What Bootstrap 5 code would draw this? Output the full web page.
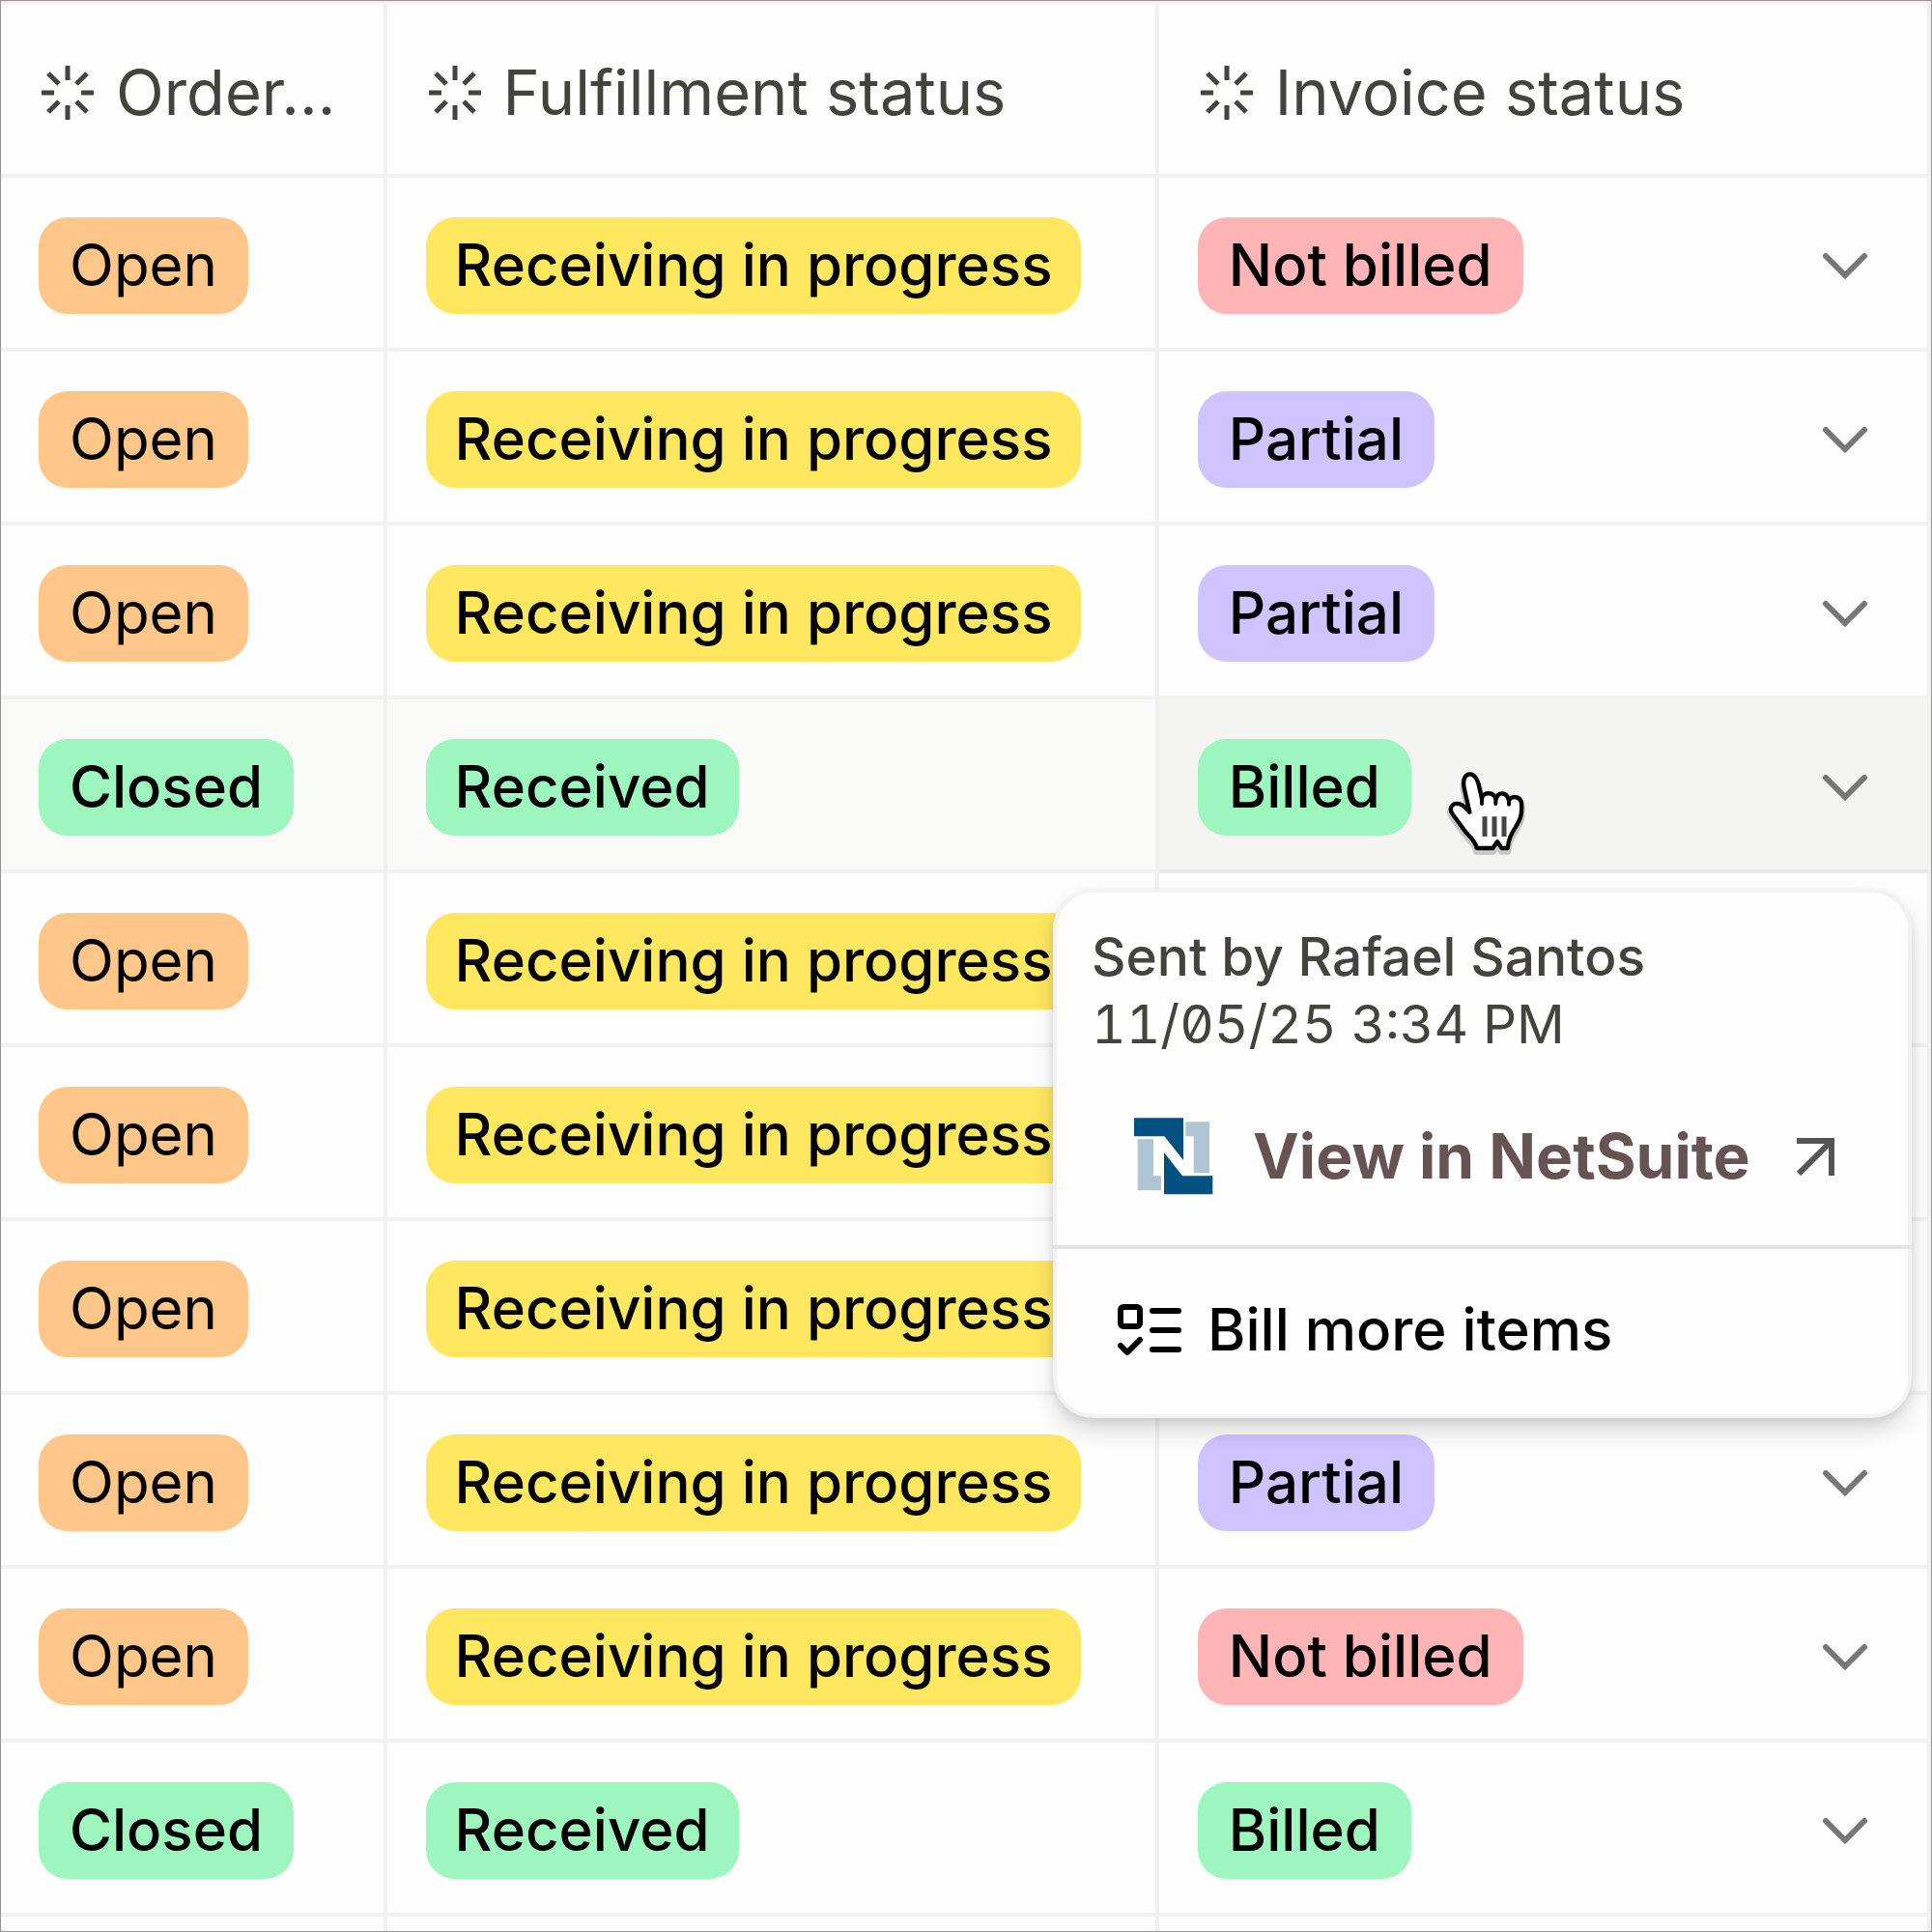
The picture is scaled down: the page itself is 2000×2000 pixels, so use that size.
<!DOCTYPE html>
<html lang="en">
<head>
<meta charset="utf-8">
<meta name="viewport" content="width=device-width, initial-scale=1">
<title>Order status table</title>
<link href="https://cdn.jsdelivr.net/npm/bootstrap@5.3.0/dist/css/bootstrap.min.css" rel="stylesheet">
<style>
  body { font-family: Inter, "Liberation Sans", sans-serif; color: #000; background: #fefefe; }
  .sheet { height: 100vh; border: 1px solid #9c9294; }
  .orders { table-layout: fixed; border-collapse: separate; border-spacing: 0; }
  .orders th, .orders td { border: 0 solid #f1f1f1; border-bottom-width: 4px; border-right-width: 4px; padding: 6px 40px 0; height: 180px; }
  .orders th { border-top: 3px solid #f3f0f3; padding-top: 8px; height: 183px; font-size: 65px; font-weight: 400; line-height: 80px; color: #45433e; }
  .orders td:first-child, .orders th:first-child { padding-left: 39px; padding-right: 16px; }
  .orders .row-hover td { background: #fafaf8; }
  .orders .row-hover td.cell-hover { background: #f4f4f2; border-bottom-color: #e9e9e7; }
  .head-label { gap: 20px; }
  .ray-icon { width: 60px; height: 60px; stroke: #45433e; stroke-width: 5; flex: none; }
  .pill { display: inline-block; padding: 9px 32px 11px; border-radius: 30px; font-size: 60px; line-height: 80px; font-weight: 500; vertical-align: middle; }
  td:nth-child(2) .pill { padding-left: 30px; padding-right: 30px; }
  .pill-orange { background: #ffc689; font-weight: 400; }
  .pill-yellow { background: #ffe75f; }
  .pill-green { background: #9df6bd; }
  .pill-red { background: #ffb4b6; }
  .pill-purple { background: #cfc4ff; }
  .toggle { width: 60px; height: 60px; margin-right: 15px; }
  .toggle svg { stroke: #777; stroke-width: 6; fill: none; stroke-linecap: round; }
  .pointer { top: 56px; left: 280px; width: 120px; height: 120px; z-index: 1; }
  .popup { top: 196px; right: 16px; width: 889px; border: 4px solid #f2f2f2; border-radius: 42px; background: #fefefe; background-clip: padding-box; box-shadow: 0 14px 24px rgba(0,0,0,.14), 0 4px 10px rgba(0,0,0,.08); z-index: 2; }
  .popup-info { margin: 0 -4px; padding: 31px 40px 52px; border-bottom: 4px solid #e3e3e3; }
  .sent { font-size: 55px; line-height: 70px; font-weight: 500; color: #45433e; }
  .sent time { font-weight: 400; font-variant-numeric: tabular-nums slashed-zero; }
  .ns-link { margin: 62px 39px 0 44px; font-size: 64px; line-height: 80px; font-weight: 700; color: #655453; }
  .ns-logo { width: 82px; height: 80px; margin-right: 41px; }
  .bill-btn { padding: 43px 60px 48px 62px; gap: 26px; font-size: 60px; line-height: 80px; font-weight: 500; color: #000; }
</style>
<script src="https://cdn.jsdelivr.net/npm/bootstrap@5.3.0/dist/js/bootstrap.bundle.min.js"></script>
</head>
<body>
<svg width="0" height="0" class="position-absolute" aria-hidden="true">
  <symbol id="rays" viewBox="0 0 60 60"><path d="M30 2v15M30 43v15M3 30h13M44 30h13M10 10l11 11M39 39l11 11M50 10L39 21M21 39L10 50"/></symbol>
  <symbol id="chevron" viewBox="0 0 60 60"><path d="M10 20L30 40L50 20"/></symbol>
</svg>
<main class="sheet overflow-hidden">
  <table class="orders w-100 align-middle">
    <colgroup><col style="width:20%"><col style="width:40%"><col style="width:40%"></colgroup>
    <thead>
      <tr>
        <th scope="col"><div class="head-label d-flex align-items-center text-nowrap"><svg class="ray-icon"><use href="#rays"/></svg>Order...</div></th>
        <th scope="col"><div class="head-label d-flex align-items-center text-nowrap"><svg class="ray-icon"><use href="#rays"/></svg>Fulfillment status</div></th>
        <th scope="col"><div class="head-label d-flex align-items-center text-nowrap"><svg class="ray-icon"><use href="#rays"/></svg>Invoice status</div></th>
      </tr>
    </thead>
    <tbody class="text-nowrap">
      <tr>
        <td><span class="pill pill-orange">Open</span></td>
        <td><span class="pill pill-yellow">Receiving in progress</span></td>
        <td><div class="d-flex align-items-center justify-content-between"><span class="pill pill-red">Not billed</span><button type="button" class="toggle btn p-0 border-0 d-flex" aria-label="Open menu"><svg width="60" height="60"><use href="#chevron"/></svg></button></div></td>
      </tr>
      <tr>
        <td><span class="pill pill-orange">Open</span></td>
        <td><span class="pill pill-yellow">Receiving in progress</span></td>
        <td><div class="d-flex align-items-center justify-content-between"><span class="pill pill-purple">Partial</span><button type="button" class="toggle btn p-0 border-0 d-flex" aria-label="Open menu"><svg width="60" height="60"><use href="#chevron"/></svg></button></div></td>
      </tr>
      <tr>
        <td><span class="pill pill-orange">Open</span></td>
        <td><span class="pill pill-yellow">Receiving in progress</span></td>
        <td><div class="d-flex align-items-center justify-content-between"><span class="pill pill-purple">Partial</span><button type="button" class="toggle btn p-0 border-0 d-flex" aria-label="Open menu"><svg width="60" height="60"><use href="#chevron"/></svg></button></div></td>
      </tr>
      <tr class="row-hover">
        <td><span class="pill pill-green">Closed</span></td>
        <td><span class="pill pill-green">Received</span></td>
        <td class="cell-hover position-relative">
          <div class="d-flex align-items-center justify-content-between"><span class="pill pill-green">Billed</span><button type="button" class="toggle btn p-0 border-0 d-flex" aria-label="Close menu" aria-expanded="true"><svg width="60" height="60"><use href="#chevron"/></svg></button></div>
          <svg class="pointer position-absolute" viewBox="0 0 360 360" aria-hidden="true">
            <g stroke-linejoin="round" stroke-linecap="round">
              <path d="M124 182L108 112C100 78 112 64 125 64C140 64 147 79 152 96L162 140C164 120 198 116 206 142C214 116 240 120 246 146C254 130 282 132 285 154C288 194 280 206 266 230C252 252 246 264 242 294H224L210 274L196 294H146C142 270 124 260 112 244L72 190C56 168 72 150 96 158C108 163 116 172 124 182Z" fill="#fff" stroke="#000" stroke-opacity=".18" stroke-width="22" transform="translate(0 10)"/>
              <path d="M124 182L108 112C100 78 112 64 125 64C140 64 147 79 152 96L162 140C164 120 198 116 206 142C214 116 240 120 246 146C254 130 282 132 285 154C288 194 280 206 266 230C252 252 246 264 242 294H224L210 274L196 294H146C142 270 124 260 112 244L72 190C56 168 72 150 96 158C108 163 116 172 124 182Z" fill="#fff" stroke="#000" stroke-width="13"/>
              <path d="M162 138V156M205 140V156M246 144V158" stroke="#000" stroke-width="12" fill="none"/>
            </g>
            <path d="M171 196V258M201 196V258M231 196V258" stroke="#444" stroke-width="15"/>
          </svg>
          <div class="popup position-absolute">
            <div class="popup-info">
              <div class="sent"><div>Sent by Rafael Santos</div><time datetime="2025-11-05T15:34">11/05/25 3:34 PM</time></div>
              <a href="#" class="ns-link d-flex align-items-center text-decoration-none">
                <svg class="ns-logo" viewBox="222 116 246 240" aria-hidden="true">
                  <path d="M222 117H375V248L316 174H222ZM315 224L372 297H466V354H315Z" fill="#00517f"/>
                  <path d="M382 129H456V288H407V174H382ZM233 183H282V297H306V342H233Z" fill="#b0c5d4"/>
                </svg>
                <span>View in NetSuite</span>
                <svg class="ms-auto" width="40" height="40" viewBox="0 0 40 40" fill="none" stroke="#555" stroke-width="6" aria-hidden="true"><path d="M0 4H36V40M36 4L2 38"/></svg>
              </a>
            </div>
            <button type="button" class="bill-btn btn border-0 d-flex align-items-center w-100">
              <svg width="68" height="60" viewBox="0 0 68 60" fill="none" stroke="#000" stroke-width="6" stroke-linecap="round" stroke-linejoin="round" aria-hidden="true"><rect x="4" y="7" width="20" height="20" rx="3"/><path d="M4 47L11 54L24 41M37 11H64M37 31H64M37 51H64"/></svg>
              <span>Bill more items</span>
            </button>
          </div>
        </td>
      </tr>
      <tr>
        <td><span class="pill pill-orange">Open</span></td>
        <td><span class="pill pill-yellow">Receiving in progress</span></td>
        <td></td>
      </tr>
      <tr>
        <td><span class="pill pill-orange">Open</span></td>
        <td><span class="pill pill-yellow">Receiving in progress</span></td>
        <td></td>
      </tr>
      <tr>
        <td><span class="pill pill-orange">Open</span></td>
        <td><span class="pill pill-yellow">Receiving in progress</span></td>
        <td></td>
      </tr>
      <tr>
        <td><span class="pill pill-orange">Open</span></td>
        <td><span class="pill pill-yellow">Receiving in progress</span></td>
        <td><div class="d-flex align-items-center justify-content-between"><span class="pill pill-purple">Partial</span><button type="button" class="toggle btn p-0 border-0 d-flex" aria-label="Open menu"><svg width="60" height="60"><use href="#chevron"/></svg></button></div></td>
      </tr>
      <tr>
        <td><span class="pill pill-orange">Open</span></td>
        <td><span class="pill pill-yellow">Receiving in progress</span></td>
        <td><div class="d-flex align-items-center justify-content-between"><span class="pill pill-red">Not billed</span><button type="button" class="toggle btn p-0 border-0 d-flex" aria-label="Open menu"><svg width="60" height="60"><use href="#chevron"/></svg></button></div></td>
      </tr>
      <tr>
        <td><span class="pill pill-green">Closed</span></td>
        <td><span class="pill pill-green">Received</span></td>
        <td><div class="d-flex align-items-center justify-content-between"><span class="pill pill-green">Billed</span><button type="button" class="toggle btn p-0 border-0 d-flex" aria-label="Open menu"><svg width="60" height="60"><use href="#chevron"/></svg></button></div></td>
      </tr>
      <tr><td></td><td></td><td></td></tr>
    </tbody>
  </table>
</main>
</body>
</html>
